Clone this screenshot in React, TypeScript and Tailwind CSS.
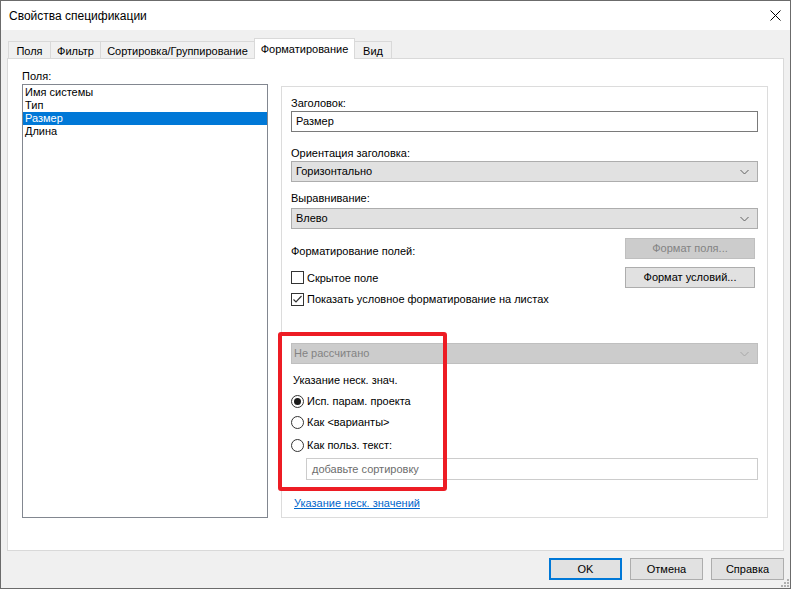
import React from "react";

function Chevron({ color = "#606060" }: { color?: string }) {
  return (
    <svg width="9" height="5" viewBox="0 0 9 5" className="absolute right-[8px] top-1/2 -translate-y-1/2">
      <path d="M0.5 0.5 L4.5 4.5 L8.5 0.5" fill="none" stroke={color} strokeWidth="1" />
    </svg>
  );
}

function Checkbox({ checked, label }: { checked?: boolean; label: string }) {
  return (
    <div className="flex items-center h-[16px] leading-[16px]">
      <div className="w-[13px] h-[13px] border border-[#333333] bg-white relative shrink-0">
        {checked && (
          <svg width="11" height="11" viewBox="0 0 11 11" className="absolute left-0 top-0">
            <path d="M1.5 5.5 L4 8 L9.5 2" fill="none" stroke="#333333" strokeWidth="1.2" />
          </svg>
        )}
      </div>
      <span className="ml-[3px] whitespace-nowrap">{label}</span>
    </div>
  );
}

function Radio({ checked, label }: { checked?: boolean; label: string }) {
  return (
    <div className="flex items-center h-[16px] leading-[16px]">
      <div className="w-[13px] h-[13px] rounded-full border border-[#333333] bg-white flex items-center justify-center shrink-0">
        {checked && <div className="w-[7px] h-[7px] rounded-full bg-[#1a1a1a]" />}
      </div>
      <span className="ml-[3px] whitespace-nowrap">{label}</span>
    </div>
  );
}

export default function App() {
  const tabs = [
    { name: "Поля", w: "w-[42px]" },
    { name: "Фильтр", w: "w-[50px]" },
    { name: "Сортировка/Группирование", w: "w-[154px]" },
  ];
  return (
    <div className="w-[791px] h-[589px] relative flex flex-col border border-[#6b6b6b] bg-[#f0f0f0] text-[11px] text-black overflow-hidden font-['Liberation_Sans',Arial,sans-serif]">
      {/* Title bar */}
      <div className="h-[29px] bg-white flex items-center pl-[8px] shrink-0 relative">
        <span className="text-[12px]">Свойства спецификации</span>
        <svg width="11" height="11" viewBox="0 0 11 11" className="absolute left-[769px] top-[9px]">
          <path d="M0.5 0.5 L10.5 10.5 M10.5 0.5 L0.5 10.5" stroke="#000" strokeWidth="1" />
        </svg>
      </div>

      {/* Body */}
      <div className="flex flex-col px-[6px] pt-[8px]">
        {/* Tabs */}
        <div className="flex items-end h-[21px] ml-[1px] -mb-px relative z-10">
          {tabs.map((t) => (
            <div
              key={t.name}
              className={`${t.w} h-[18px] border-l border-t border-b border-[#d9d9d9] bg-[#f0f0f0] flex items-center justify-center leading-[16px] pt-[1px] whitespace-nowrap`}
            >
              {t.name}
            </div>
          ))}
          <div className="w-[101px] h-[21px] border-l border-t border-r border-[#d9d9d9] bg-white flex items-start justify-center pt-[2px] leading-[16px] whitespace-nowrap">
            Форматирование
          </div>
          <div className="w-[37px] h-[18px] border-t border-r border-b border-[#d9d9d9] bg-[#f0f0f0] flex items-center justify-center leading-[16px] pt-[1px]">
            Вид
          </div>
        </div>

        {/* Panel */}
        <div className="h-[493px] border border-[#d9d9d9] bg-white flex">
          {/* Left column */}
          <div className="ml-[14px] pt-[9px] w-[246px] shrink-0">
            <div className="h-[16px] leading-[16px]">Поля:</div>
            <div className="h-[434px] border border-[#828790] pt-px">
              <div className="h-[13px] leading-[13px] pl-[2px]">Имя системы</div>
              <div className="h-[13px] leading-[13px] pl-[2px]">Тип</div>
              <div className="h-[13px] leading-[13px] pl-[2px] bg-[#0078d7] text-white">Размер</div>
              <div className="h-[13px] leading-[13px] pl-[2px]">Длина</div>
            </div>
          </div>

          {/* Group box */}
          <div className="ml-[13px] mt-[27px] w-[487px] h-[432px] border border-[#dcdcdc] px-[9px] pt-[8px] flex flex-col shrink-0">
            <div className="h-[16px] leading-[16px]">Заголовок:</div>
            <div className="h-[21px] border border-[#7a7a7a] bg-white flex items-center pl-[4px]">Размер</div>

            <div className="mt-[13px] h-[16px] leading-[16px]">Ориентация заголовка:</div>
            <div className="h-[21px] border border-[#adadad] bg-[#e1e1e1] flex items-center pl-[4px] relative">
              Горизонтально
              <Chevron />
            </div>

            <div className="mt-[8px] h-[16px] leading-[16px]">Выравнивание:</div>
            <div className="mt-[2px] h-[21px] border border-[#adadad] bg-[#e1e1e1] flex items-center pl-[4px] relative">
              Влево
              <Chevron />
            </div>

            <div className="mt-[9px] flex justify-between items-end">
              <div className="h-[16px] leading-[16px]">Форматирование полей:</div>
              <div className="w-[130px] h-[21px] mr-[3px] border border-[#bfbfbf] bg-[#cccccc] text-[#838383] flex items-center justify-center">
                Формат поля...
              </div>
            </div>

            <div className="mt-[8px] flex justify-between items-center">
              <Checkbox label="Скрытое поле" />
              <div className="w-[130px] h-[21px] mr-[3px] border border-[#adadad] bg-[#e1e1e1] flex items-center justify-center">
                Формат условий...
              </div>
            </div>

            <div className="mt-[3px]">
              <Checkbox checked label="Показать условное форматирование на листах" />
            </div>

            <div className="mt-[36px] h-[21px] border border-[#bfbfbf] bg-[#cccccc] text-[#838383] flex items-center pl-[2px] relative">
              Не рассчитано
              <Chevron color="#a8a8a8" />
            </div>

            <div className="mt-[8px] h-[16px] leading-[16px] pl-[2px]">Указание неск. знач.</div>
            <div className="mt-[5px]">
              <Radio checked label="Исп. парам. проекта" />
            </div>
            <div className="mt-[5px]">
              <Radio label="Как <варианты>" />
            </div>
            <div className="mt-[7px]">
              <Radio label="Как польз. текст:" />
            </div>
            <div className="mt-[5px] ml-[15px] h-[22px] border border-[#cccccc] bg-white flex items-center pl-[5px] text-[#6d6d6d]">
              добавьте сортировку
            </div>

            <div className="mt-[15px] h-[16px] leading-[16px] pl-[3px]">
              <span className="text-[#0066cc] underline">Указание неск. значений</span>
            </div>
          </div>
        </div>

        {/* Footer buttons */}
        <div className="mt-[7px] flex justify-end gap-[8px]">
          <div className="w-[73px] h-[22px] border-2 border-[#0078d7] bg-[#e1e1e1] flex items-center justify-center">OK</div>
          <div className="w-[73px] h-[22px] border border-[#adadad] bg-[#e1e1e1] flex items-center justify-center">Отмена</div>
          <div className="w-[73px] h-[22px] border border-[#adadad] bg-[#e1e1e1] flex items-center justify-center">Справка</div>
        </div>
      </div>

      {/* Resize grip */}
      <svg width="8" height="8" viewBox="0 0 8 8" className="absolute right-[1px] bottom-[1px]">
        <rect x="6" y="0" width="2" height="2" fill="#b0b0b0" />
        <rect x="3" y="3" width="2" height="2" fill="#b0b0b0" />
        <rect x="6" y="3" width="2" height="2" fill="#b0b0b0" />
        <rect x="0" y="6" width="2" height="2" fill="#b0b0b0" />
        <rect x="3" y="6" width="2" height="2" fill="#b0b0b0" />
        <rect x="6" y="6" width="2" height="2" fill="#b0b0b0" />
      </svg>

      {/* Red highlight rectangle */}
      <div className="absolute left-[277px] top-[331px] w-[169px] h-[159px] border-[4px] border-[#ed1c24] rounded-[3px] pointer-events-none" />
    </div>
  );
}
